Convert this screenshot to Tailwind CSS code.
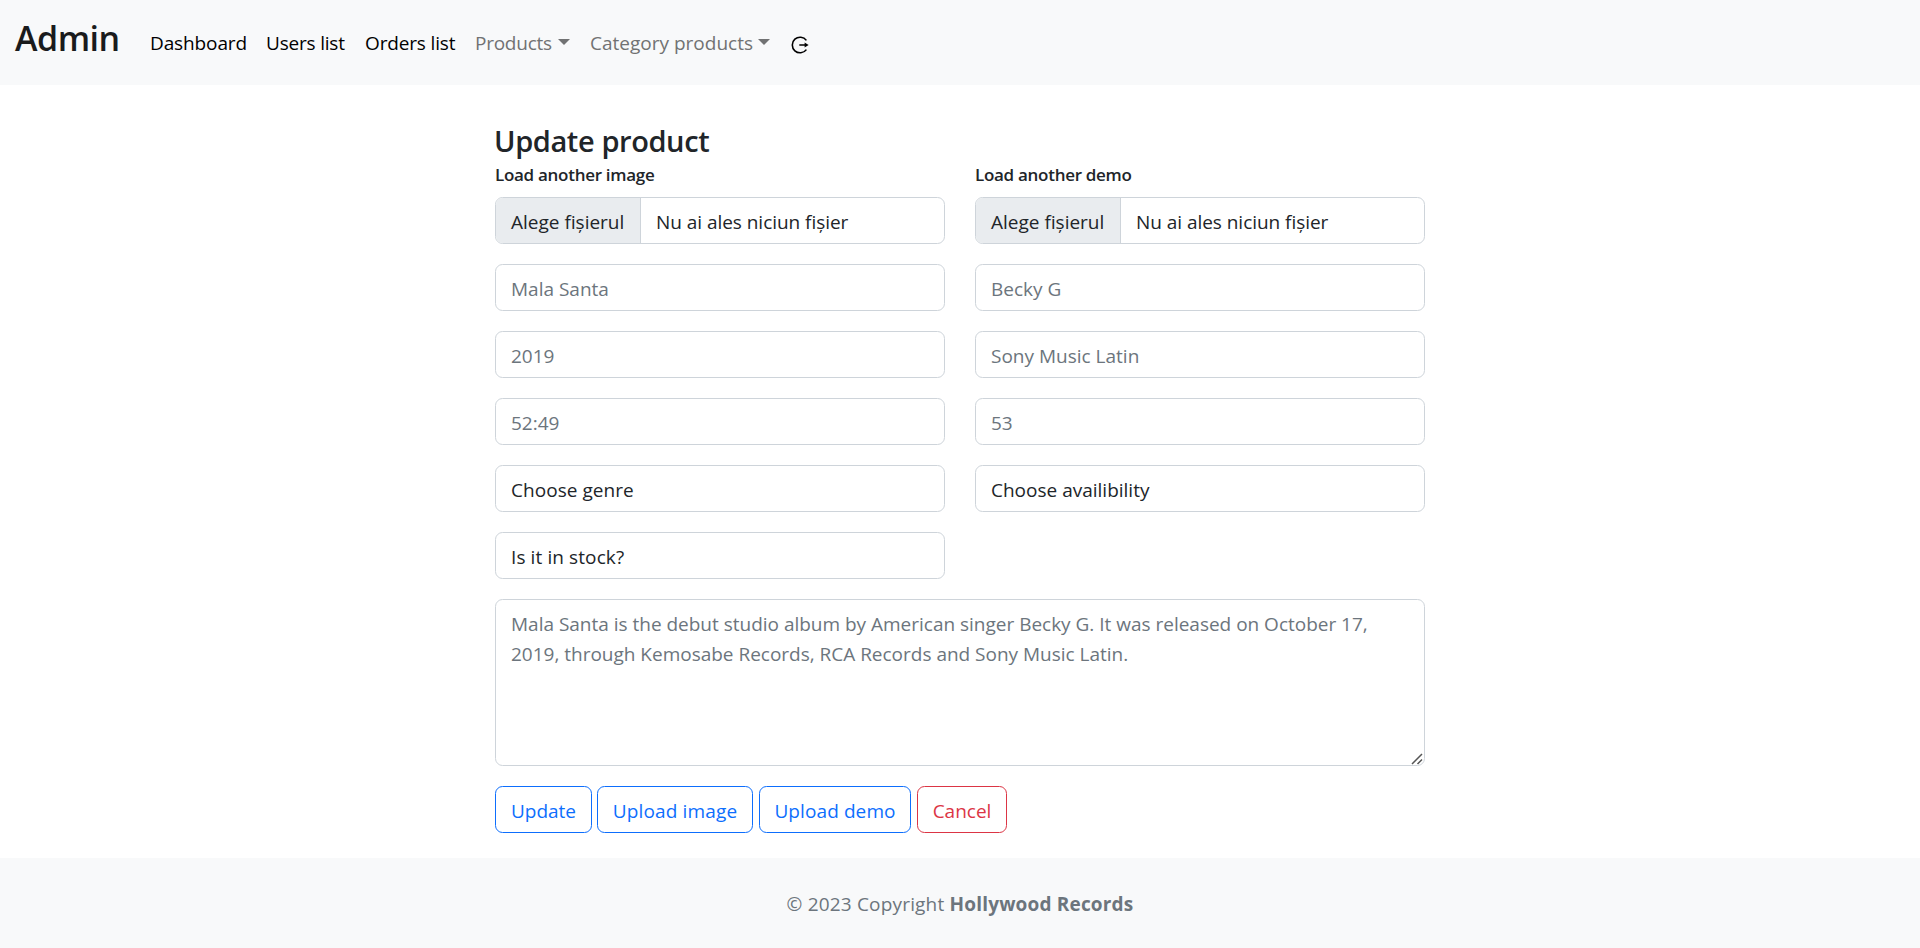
<!DOCTYPE html>
<html lang="ro">
<head>
<meta charset="utf-8">
<title>Admin</title>
<script src="https://cdn.jsdelivr.net/npm/@tailwindcss/browser@4"></script>
</head>
<body class="flex h-[948px] flex-col overflow-hidden bg-white font-['Open_Sans',sans-serif] text-[19px] leading-[30px] text-[#212529]">
<nav class="flex h-[85px] shrink-0 items-start bg-[#f8f9fa] pl-[15px]">
  <a class="w-[135px] pt-[13px] text-[34px] leading-[51px] font-semibold tracking-[-0.5px] text-[#1a1b1c]">Admin</a>
  <div class="flex pt-[28px] text-black">
    <a class="w-[116px] tracking-[-0.12px]">Dashboard</a>
    <a class="w-[99px] tracking-[-0.2px]">Users list</a>
    <a class="w-[110px] tracking-[-0.15px]">Orders list</a>
    <a class="flex w-[115px] gap-[6px] tracking-[-0.25px] text-[#717273]">Products<span class="mt-[11px] h-0 w-0 border-x-[6px] border-t-[6px] border-x-transparent border-t-[#717273]"></span></a>
    <a class="flex w-[200px] gap-[5px] text-[#717273]">Category products<span class="mt-[11px] h-0 w-0 border-x-[6px] border-t-[6px] border-x-transparent border-t-[#717273]"></span></a>
    <svg class="mt-[7px] h-5 w-5" viewBox="0 0 20 20" fill="none" stroke="#000" stroke-width="1.6"><path d="M16.4 5.4A7.8 7.8 0 1 0 16.4 14.6M9.3 10H16"/><path d="M14.6 7.6 18.6 10 14.6 12.4Z" fill="#000" stroke="none"/></svg>
  </div>
</nav>

<main class="mx-auto w-[930px] flex-1 pt-[36px]">
  <h3 class="-ml-px h-[40px] text-[29px] leading-[39px] font-semibold tracking-[-0.4px]">Update product</h3>
  <div class="grid grid-cols-2 gap-x-[30px] pt-px text-[17px] leading-[26px] font-semibold tracking-[-0.29px]">
    <label>Load another image</label>
    <label>Load another demo</label>
  </div>
  <div class="mt-[9px] grid grid-cols-2 gap-x-[30px] gap-y-5">
    <div class="flex h-[47px] overflow-hidden rounded-[7.5px] border border-[#ced4da]">
      <span class="w-[145px] border-r border-[#ced4da] bg-[#e9ecef] pt-[9px] pl-[15px] leading-[30px]">Alege fișierul</span>
      <span class="pt-[9px] pl-[15px] leading-[30px] tracking-[-0.04px]">Nu ai ales niciun fișier</span>
    </div>
    <div class="flex h-[47px] overflow-hidden rounded-[7.5px] border border-[#ced4da]">
      <span class="w-[145px] border-r border-[#ced4da] bg-[#e9ecef] pt-[9px] pl-[15px] leading-[30px]">Alege fișierul</span>
      <span class="pt-[9px] pl-[15px] leading-[30px] tracking-[-0.04px]">Nu ai ales niciun fișier</span>
    </div>
    <input class="h-[47px] rounded-[7.5px] border border-[#ced4da] px-[15px] pt-[2px] placeholder:text-[#6c757d]" placeholder="Mala Santa">
    <input class="h-[47px] rounded-[7.5px] border border-[#ced4da] px-[15px] pt-[2px] placeholder:text-[#6c757d]" placeholder="Becky G">
    <input class="h-[47px] rounded-[7.5px] border border-[#ced4da] px-[15px] pt-[2px] placeholder:text-[#6c757d]" placeholder="2019">
    <input class="h-[47px] rounded-[7.5px] border border-[#ced4da] px-[15px] pt-[2px] placeholder:text-[#6c757d]" placeholder="Sony Music Latin">
    <input class="h-[47px] rounded-[7.5px] border border-[#ced4da] px-[15px] pt-[2px] placeholder:text-[#6c757d]" placeholder="52:49">
    <input class="h-[47px] rounded-[7.5px] border border-[#ced4da] px-[15px] pt-[2px] placeholder:text-[#6c757d]" placeholder="53">
    <select class="h-[47px] appearance-none rounded-[7.5px] border border-[#ced4da] px-[15px] pt-[2px] tracking-[0.04px]"><option>Choose genre</option></select>
    <select class="h-[47px] appearance-none rounded-[7.5px] border border-[#ced4da] px-[15px] pt-[2px]"><option>Choose availibility</option></select>
    <select class="h-[47px] appearance-none rounded-[7.5px] border border-[#ced4da] px-[15px] pt-[2px] tracking-[0.1px]"><option>Is it in stock?</option></select>
  </div>
  <div class="relative mt-5">
    <textarea class="block h-[167px] w-full resize-none rounded-[7.5px] border border-[#ced4da] px-[15px] pt-[9px] leading-[30px] tracking-[-0.01px] placeholder:text-[#6c757d]" placeholder="Mala Santa is the debut studio album by American singer Becky G. It was released on October 17, 2019, through Kemosabe Records, RCA Records and Sony Music Latin."></textarea>
    <svg class="absolute right-[2px] bottom-[1px] h-3 w-3" viewBox="0 0 12 12" stroke="#555" stroke-width="1.5"><path d="M1 11 11 1M6.5 11 11 6.5"/></svg>
  </div>
  <div class="mt-5 flex text-[#0d6efd]">
    <button class="mr-[5px] h-[47px] w-[97px] rounded-[7.5px] border border-[#0d6efd] pt-[2px]">Update</button>
    <button class="mr-[6px] h-[47px] w-[156px] rounded-[7.5px] border border-[#0d6efd] pt-[2px] tracking-[0.15px]">Upload image</button>
    <button class="mr-[6px] h-[47px] w-[152px] rounded-[7.5px] border border-[#0d6efd] pt-[2px] tracking-[0.1px]">Upload demo</button>
    <button class="h-[47px] w-[90px] rounded-[7.5px] border border-[#dc3545] pt-[2px] text-[#dc3545]">Cancel</button>
  </div>
</main>

<footer class="h-[90px] shrink-0 bg-[#f8f9fa] pt-[31px] text-center tracking-[0.18px] text-[#6c757d]">© 2023 Copyright <a class="font-bold">Hollywood Records</a></footer>
</body>
</html>
